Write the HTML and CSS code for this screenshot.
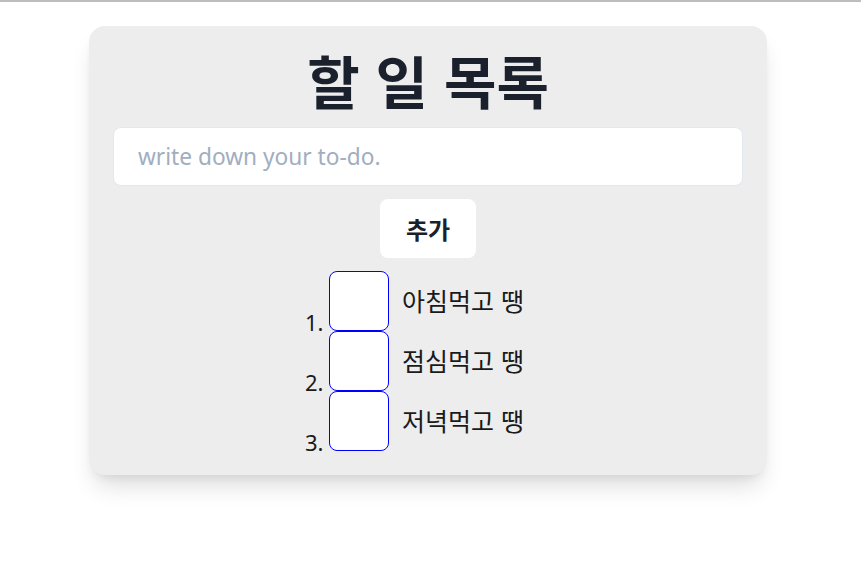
FILE: index.html
```html
<!DOCTYPE html>
<html lang="ko">
<head>
<meta charset="utf-8">
<title>할 일 목록</title>
<link rel="stylesheet" href="styles.css">
</head>
<body>
<div class="topline"></div>
<main class="card">
  <h1 class="title">할 일 목록</h1>
  <input class="todo-input" type="text" placeholder="write down your to-do.">
  <div class="actions"><button class="add-btn" type="button">추가</button></div>
  <ol class="todo-list">
    <li class="todo-item"><input class="check" type="checkbox"><span class="label">아침먹고 땡</span></li>
    <li class="todo-item"><input class="check" type="checkbox"><span class="label">점심먹고 땡</span></li>
    <li class="todo-item"><input class="check" type="checkbox"><span class="label">저녁먹고 땡</span></li>
  </ol>
</main>
</body>
</html>
```

FILE: styles.css
```css
html, body {
  margin: 0;
  padding: 0;
  background: #ffffff;
}
body {
  min-height: 586px;
  font-family: "Noto Sans", "Noto Sans CJK KR", sans-serif;
  color: #1a1a1a;
}
.topline {
  height: 2px;
  background: #bdbdbd;
}
.card {
  box-sizing: border-box;
  width: 678px;
  margin: 24px 0 0 calc(50% - 341.5px);
  padding: 24px;
  background: #ededed;
  border-radius: 16px;
  box-shadow: 0 16px 24px -6px rgba(0, 0, 0, 0.14), 0 6px 10px -4px rgba(0, 0, 0, 0.07);
}
.title {
  margin: 0 0 19px;
  font-family: "Noto Sans CJK KR", sans-serif;
  font-size: 57px;
  line-height: 58px;
  font-weight: 700;
  text-align: center;
  color: #1a202c;
}
.todo-input {
  display: block;
  box-sizing: border-box;
  width: 100%;
  height: 59px;
  padding: 0 24px;
  border: 1px solid #e2e8f0;
  border-radius: 8px;
  background: #ffffff;
  font-family: "Noto Sans", "Noto Sans CJK KR", sans-serif;
  font-size: 22.7px;
  color: #1a202c;
  outline: none;
}
.todo-input::placeholder {
  color: #a0aec0;
}
.actions {
  display: flex;
  justify-content: center;
  margin-top: 13px;
}
.add-btn {
  width: 96px;
  height: 59px;
  border: none;
  border-radius: 8px;
  background: #ffffff;
  font-family: "Noto Sans CJK KR", sans-serif;
  font-size: 24px;
  font-weight: 700;
  color: #1a202c;
}
.todo-list {
  margin: 13px 0 0;
  padding: 0 27px 0 0;
  list-style-position: inside;
  text-align: center;
  font-size: 22px;
}
.todo-item {
  height: 60px;
  line-height: 1;
}
.check {
  appearance: none;
  -webkit-appearance: none;
  box-sizing: border-box;
  width: 60px;
  height: 60px;
  margin: 0 13px 0 0;
  border: 1px solid #0000ff;
  border-radius: 8px;
  background: #ffffff;
  vertical-align: baseline;
}
.label {
  font-family: "Noto Sans CJK KR", sans-serif;
  font-size: 25px;
  vertical-align: 20px;
  color: #1a1a1a;
}
```
